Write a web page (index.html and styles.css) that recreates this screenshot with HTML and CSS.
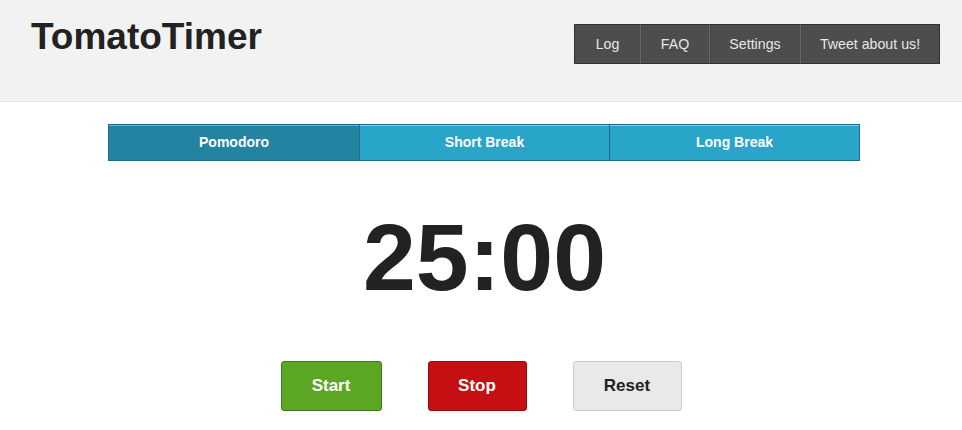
FILE: index.html
```html
<!DOCTYPE html>
<html>
<head>
<meta charset="utf-8">
<link rel="stylesheet" href="styles.css">
</head>
<body>
<header class="header">
  <h1 class="logo">TomatoTimer</h1>
  <nav class="nav">
    <a class="nav-item">Log</a>
    <a class="nav-item">FAQ</a>
    <a class="nav-item">Settings</a>
    <a class="nav-item">Tweet about us!</a>
  </nav>
</header>
<main class="main">
  <div class="tabs">
    <div class="tab active">Pomodoro</div>
    <div class="tab">Short Break</div>
    <div class="tab">Long Break</div>
  </div>
  <div class="timer">25:00</div>
  <div class="controls">
    <button class="btn start">Start</button>
    <button class="btn stop">Stop</button>
    <button class="btn reset">Reset</button>
  </div>
</main>
</body>
</html>
```

FILE: styles.css
```css
* { box-sizing: border-box; }
html, body { margin: 0; padding: 0; background: #fff; font-family: "Liberation Sans", Arial, sans-serif; }
.header {
  height: 102px;
  background: #f2f2f2;
  border-bottom: 1px solid #e3e3e3;
  display: flex;
  justify-content: space-between;
  align-items: flex-start;
  padding: 0 22px 0 31px;
}
.logo {
  margin: 14px 0 0 0;
  font-size: 37px;
  font-weight: bold;
  color: #222;
  line-height: 46px;
}
.nav {
  margin-top: 24px;
  display: flex;
  height: 40px;
  border: 1px solid #333;
  background: #4d4d4d;
}
.nav-item {
  display: flex;
  align-items: center;
  justify-content: center;
  color: #e6e6e6;
  font-size: 14.2px;
  white-space: nowrap;
  padding: 0;
  border-left: 1px solid #6a6a6a;
  box-shadow: inset 1px 0 0 #444;
}
.nav-item:first-child { border-left: none; box-shadow: none; width: 65px; }
.nav-item:nth-child(2) { width: 69px; }
.nav-item:nth-child(3) { width: 91px; }
.nav-item:nth-child(4) { width: 139px; }
.main {
  display: flex;
  flex-direction: column;
  align-items: center;
}
.tabs {
  margin-top: 22px;
  width: 752px;
  height: 37px;
  display: grid;
  grid-template-columns: 1fr 1fr 1fr;
  border: 1px solid #1d6e88;
  margin-left: 6px;
}
.tab {
  background: #2aa5ca;
  color: #fff;
  font-weight: bold;
  font-size: 14px;
  display: flex;
  align-items: center;
  justify-content: center;
  padding-bottom: 1px;
  box-shadow: inset 0 1px 0 #7ecde5;
  border-left: 1px solid #1d6e88;
}
.tab:first-child { border-left: none; }
.tab.active { background: #2383a0; box-shadow: inset 0 1px 0 #5fb3cc; }
.timer {
  margin-top: 36px;
  font-size: 95px;
  font-weight: bold;
  color: #222;
  line-height: 120px;
  margin-left: 7px;
}
.controls {
  margin-top: 44px;
  display: flex;
  gap: 46px;
  margin-left: 0;
}
.btn {
  height: 50px;
  border-radius: 3px;
  font-family: "Liberation Sans", Arial, sans-serif;
  font-weight: bold;
  font-size: 17px;
  color: #fff;
  border: 1px solid;
  padding: 0;
}
.start { width: 101px; background: #5ba623; border-color: #3f7a18; }
.stop { width: 99px; background: #c60f13; border-color: #920b0e; }
.reset { width: 109px; background: #e9e9e9; border-color: #cbcbcb; color: #222; }
```
